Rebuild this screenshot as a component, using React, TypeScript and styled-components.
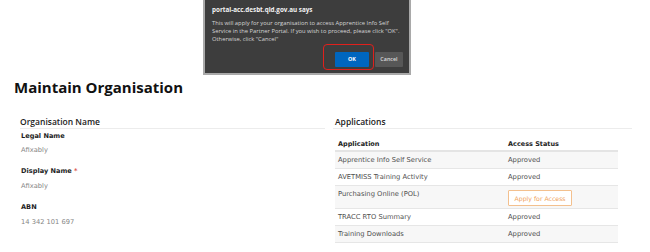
import styled, { createGlobalStyle } from 'styled-components';

const GlobalStyle = createGlobalStyle`
  html, body {
    margin: 0;
    padding: 0;
    background: #ffffff;
  }
  body {
    font-family: 'DejaVu Sans', Verdana, sans-serif;
  }
`;

const Page = styled.div`
  position: relative;
  width: 650px;
  height: 252px;
  overflow: hidden;
  padding: 78px 0 0 14px;
  box-sizing: border-box;
`;

const Heading = styled.h1`
  margin: 0;
  font-family: 'Open Sans', sans-serif;
  font-size: 15px;
  line-height: 18px;
  font-weight: 700;
  color: #111;
`;

const Columns = styled.div`
  display: grid;
  grid-template-columns: 305px 299px;
  column-gap: 8px;
  margin: 21px 0 0 6px;
`;

const Column = styled.section`
  display: flex;
  flex-direction: column;
`;

const SectionTitle = styled.h2<{ $indent?: number }>`
  margin: 0;
  padding: 0 0 1px ${(p) => p.$indent ?? 0}px;
  font-family: 'Open Sans', sans-serif;
  font-size: 8.5px;
  line-height: 10px;
  font-weight: 600;
  color: #222;
  border-bottom: 1px solid #ececec;
`;

const FieldList = styled.dl`
  margin: 2.6px 0 0 1px;
  display: flex;
  flex-direction: column;
  gap: 12px;
`;

const Field = styled.div`
  display: flex;
  flex-direction: column;
  gap: 5.7px;
`;

const Label = styled.dt`
  font-size: 6.6px;
  line-height: 9px;
  font-weight: 700;
  color: #1e1e1e;
`;

const Required = styled.span`
  color: #d9534f;
`;

const Value = styled.dd`
  margin: 0;
  font-size: 6.7px;
  line-height: 9px;
  color: #858585;
`;

const Table = styled.table`
  margin: 7px 0 0 2px;
  width: 283px;
  border-collapse: collapse;
  table-layout: fixed;
`;

const HeadCell = styled.th<{ $width?: number }>`
  width: ${(p) => (p.$width ? `${p.$width}px` : 'auto')};
  text-align: left;
  padding: 4px 3px 1px;
  font-size: 6.5px;
  line-height: 9px;
  font-weight: 700;
  color: #222;
  border-bottom: 2px solid #e4e4e4;
`;

const Row = styled.tr`
  &:nth-child(odd) {
    background: #f7f7f7;
  }
  border-bottom: 1px solid #e6e6e6;
`;

const Cell = styled.td`
  vertical-align: top;
  padding: 4px 3px 3px;
  font-size: 6.75px;
  line-height: 9px;
  color: #505050;
  white-space: nowrap;
`;

const ApplyButton = styled.button`
  display: block;
  height: 16px;
  margin: 0 0 -1px;
  padding: 0 5.5px;
  font-family: 'DejaVu Sans', Verdana, sans-serif;
  font-size: 6.2px;
  color: #f0a25c;
  background: #ffffff;
  border: 1px solid #f3c08e;
  border-radius: 1px;
  cursor: pointer;
`;

/* browser confirm dialog laid over the page */
const Dialog = styled.div`
  position: absolute;
  top: 0;
  left: 203px;
  width: 208px;
  padding: 6px 6px 6px 7px;
  box-sizing: border-box;
  background: #3d3d3d;
  border: 2px solid #a9a9a9;
  border-top: none;
  font-family: 'Open Sans', sans-serif;
  display: flex;
  flex-direction: column;
`;

const DialogTitle = styled.div`
  font-size: 6.3px;
  line-height: 8px;
  font-weight: 700;
  color: #f2f2f2;
`;

const DialogText = styled.p`
  margin: 6px 0 0;
  font-size: 5.8px;
  line-height: 7.8px;
  color: #d6d6d6;
  white-space: nowrap;
`;

const DialogActions = styled.div`
  display: flex;
  justify-content: flex-end;
  gap: 6px;
  margin-top: 8.5px;
`;

const DialogButton = styled.button<{ $primary?: boolean }>`
  position: relative;
  height: 15px;
  width: ${(p) => (p.$primary ? 34 : 28)}px;
  padding: 0;
  border: none;
  border-radius: 1px;
  font-family: 'Open Sans', sans-serif;
  font-size: 5.4px;
  font-weight: ${(p) => (p.$primary ? 700 : 600)};
  color: ${(p) => (p.$primary ? '#ffffff' : '#dcdcdc')};
  background: ${(p) => (p.$primary ? '#0066bf' : '#575757')};
`;

const Highlight = styled.span`
  position: absolute;
  top: -8px;
  left: -12px;
  right: -5px;
  bottom: -3px;
  border: 1.5px solid #e0201c;
  border-radius: 4px;
  pointer-events: none;
`;

const applications = [
  { name: 'Apprentice Info Self Service', status: 'Approved' },
  { name: 'AVETMISS Training Activity', status: 'Approved' },
  { name: 'Purchasing Online (POL)', status: null },
  { name: 'TRACC RTO Summary', status: 'Approved' },
  { name: 'Training Downloads', status: 'Approved' },
];

export default function App() {
  return (
    <>
      <GlobalStyle />
      <Page>
        <Heading>Maintain Organisation</Heading>
        <Columns>
          <Column>
            <SectionTitle>Organisation Name</SectionTitle>
            <FieldList>
              <Field>
                <Label>Legal Name</Label>
                <Value>Afixably</Value>
              </Field>
              <Field>
                <Label>
                  Display Name <Required>*</Required>
                </Label>
                <Value>Afixably</Value>
              </Field>
              <Field>
                <Label>ABN</Label>
                <Value>14 342 101 697</Value>
              </Field>
            </FieldList>
          </Column>
          <Column>
            <SectionTitle $indent={2}>Applications</SectionTitle>
            <Table>
              <thead>
                <tr>
                  <HeadCell $width={164}>Application</HeadCell>
                  <HeadCell>Access Status</HeadCell>
                </tr>
              </thead>
              <tbody>
                {applications.map((app) => (
                  <Row key={app.name}>
                    <Cell>{app.name}</Cell>
                    <Cell>
                      {app.status ?? <ApplyButton>Apply for Access</ApplyButton>}
                    </Cell>
                  </Row>
                ))}
              </tbody>
            </Table>
          </Column>
        </Columns>

        <Dialog>
          <DialogTitle>portal-acc.desbt.qld.gov.au says</DialogTitle>
          <DialogText>
            This will apply for your organisation to access Apprentice Info Self
            <br />
            Service in the Partner Portal. If you wish to proceed, please click "OK".
            <br />
            Otherwise, click "Cancel"
          </DialogText>
          <DialogActions>
            <DialogButton $primary>
              OK
              <Highlight />
            </DialogButton>
            <DialogButton>Cancel</DialogButton>
          </DialogActions>
        </Dialog>
      </Page>
    </>
  );
}
